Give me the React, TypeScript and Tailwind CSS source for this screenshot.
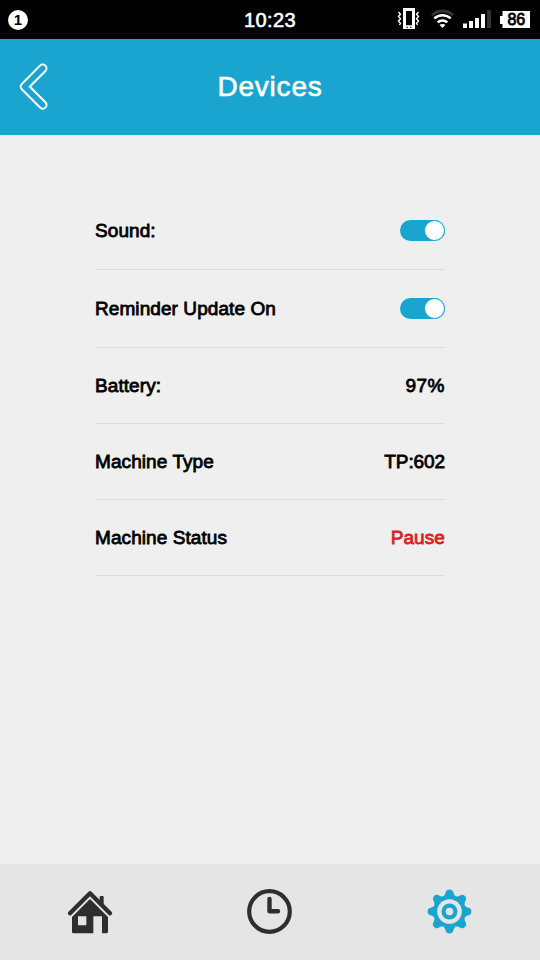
import { useState } from "react";
import type { ReactNode } from "react";

const StatusBar = () => (
  <div className="h-[39px] shrink-0 bg-black text-white flex items-center justify-between pl-2 pr-[9px]">
    <div className="w-[135px]">
      <div className="size-5 rounded-full bg-white text-black text-[15px] leading-5 font-bold text-center">1</div>
    </div>

    <div className="text-[20px] leading-none tracking-[0.4px] pt-px pl-px [-webkit-text-stroke:0.6px_currentColor]">10:23</div>

    <div className="w-[135px] flex justify-end">
      <svg className="w-[135px] h-[39px]" viewBox="396 0 135 39" fill="none">
        {/* vibrate */}
        <rect x="404.500" y="9.500" width="9" height="18" stroke="white" strokeWidth="3" />
        <path d="M403 27h12" stroke="white" strokeWidth="3.500" />
        <path d="M406.500 27.300h1.500M410 27.300h1.500" stroke="black" />
        <path d="M398.500 12l2 2.200-2 2.300 2 2.300-2 2.300 2 2.200-1 1.700M418.500 12l-2 2.200 2 2.300-2 2.300 2 2.300-2 2.200 1 1.700" stroke="white" strokeWidth="1.400" />
        {/* wifi */}
        <path d="M432 15.200a15.500 15.500 0 0 1 21 0" stroke="#333333" strokeWidth="3" />
        <path d="M434.300 18.400a12 12 0 0 1 16.400 0M437.700 22.300a7 7 0 0 1 9.600 0" stroke="white" strokeWidth="2.500" />
        <path d="M439.500 24.800q3-1.800 6 0l-3 3.200z" fill="white" />
        {/* signal */}
        <path d="M463 23.500h4V28h-4zM469 21h4v7h-4zM475 18h4v10h-4zM481 14h4v14h-4z" fill="white" />
        <path d="M487 10h4v18h-4z" fill="#333333" />
        {/* battery */}
        <path d="M502.500 11H530v17h-27.500v-4H500v-8h2.500z" fill="white" />
        <text x="516.300" y="25" textAnchor="middle" fontSize="16" fill="black" stroke="black" strokeWidth="0.800">86</text>
      </svg>
    </div>
  </div>
);

const Header = () => (
  <header className="h-24 shrink-0 bg-[#1aa5d1] text-white grid grid-cols-[1fr_auto_1fr] items-center px-[18px]">
    <button aria-label="Back" className="w-8">
      <svg width="32" height="50" viewBox="18 61.700 32 50" fill="none" strokeLinecap="round" strokeLinejoin="round">
        <path d="M42.700 68L24.500 86.300l18.200 18.300" stroke="white" strokeWidth="9.600" />
        <path d="M42.700 68L24.500 86.300l18.200 18.300" stroke="#1aa5d1" strokeWidth="5.600" />
      </svg>
    </button>
    <h1 className="text-[28px] leading-none tracking-[0.8px] [-webkit-text-stroke:0.6px_currentColor]">Devices</h1>
  </header>
);

const Toggle = () => {
  const [on, setOn] = useState(true);

  return (
    <button
      role="switch"
      aria-checked={on}
      onClick={() => setOn(!on)}
      className={`w-[45px] h-[21px] rounded-full flex items-center ${on ? "bg-[#1aa5d1] justify-end" : "bg-gray-300 justify-start"}`}
    >
      <span className="size-[21px] shrink-0 rounded-full bg-white border border-[#1aa5d1]" />
    </button>
  );
};

const Row = ({ label, className, children }: { label: string; className: string; children: ReactNode }) => (
  <div className={`flex items-center justify-between border-b border-[#dcdcdc] ${className}`}>
    <span className="pt-0.5">{label}</span>
    {children}
  </div>
);

const BottomNav = () => (
  <nav className="h-24 shrink-0 bg-[#e5e5e5] grid grid-cols-3 items-center justify-items-center">
    <button aria-label="Home">
      <svg width="48" height="48" viewBox="48 98 144 144" fill="#2e2e2e">
        <path d="M149 150v-25q0-3 3-3h6q3 0 3 3v37z" />
        <path d="M60 174l60-60 60 60" fill="none" stroke="#2e2e2e" strokeWidth="13" strokeLinecap="round" strokeLinejoin="round" />
        <path fillRule="evenodd" d="M66 185l54-54 54 54v44q0 5-5 5h-13v-51h-26v51H71q-5 0-5-5zM84 183h25v27H84z" />
      </svg>
    </button>
    <button aria-label="History">
      <svg width="48" height="48" viewBox="0 0 48 48" fill="none" stroke="#2e2e2e">
        <circle cx="23.500" cy="23.500" r="20.300" strokeWidth="4.200" />
        <path d="M23.500 11v12.300h8.500" strokeWidth="4.400" strokeLinecap="round" strokeLinejoin="round" />
      </svg>
    </button>
    <button aria-label="Settings">
      <svg width="48" height="48" viewBox="-23.500 -23.500 48 48" fill="#1aa5d1">
        <circle r="16.400" />
        {[0, 45, 90, 135, 180, 225, 270, 315].map((angle) => (
          <path key={angle} transform={`rotate(${angle})`} d="M-6.300 -15C-4.800 -16.300 -4.200 -17.500 -3.800 -19.200Q-3 -21.900 0 -21.900T3.800 -19.200C4.200 -17.500 4.800 -16.300 6.300 -15z" />
        ))}
        <circle r="12.300" fill="#e5e5e5" />
        <circle r="8" />
        <circle r="3.800" fill="#e5e5e5" />
      </svg>
    </button>
  </nav>
);

const App = () => {
  return (
    <div className="h-screen flex flex-col bg-[#efefef] font-['Liberation_Sans',sans-serif]">
      <StatusBar />
      <Header />

      <main className="flex-grow pt-[57px] px-[95px] text-[19px] tracking-[0.08px] text-black [-webkit-text-stroke:0.8px_currentColor]">
        <Row label="Sound:" className="h-[78px]">
          <Toggle />
        </Row>
        <Row label="Reminder Update On" className="h-[78px]">
          <Toggle />
        </Row>
        <Row label="Battery:" className="h-[76px]">
          <span className="pt-0.5 tracking-[0.5px]">97%</span>
        </Row>
        <Row label="Machine Type" className="h-[76px]">
          <span className="pt-0.5 tracking-[-0.1px]">TP:602</span>
        </Row>
        <Row label="Machine Status" className="h-[76px]">
          <span className="pt-0.5 text-[#dc2020]">Pause</span>
        </Row>
      </main>

      <BottomNav />
    </div>
  );
};

export default App;
